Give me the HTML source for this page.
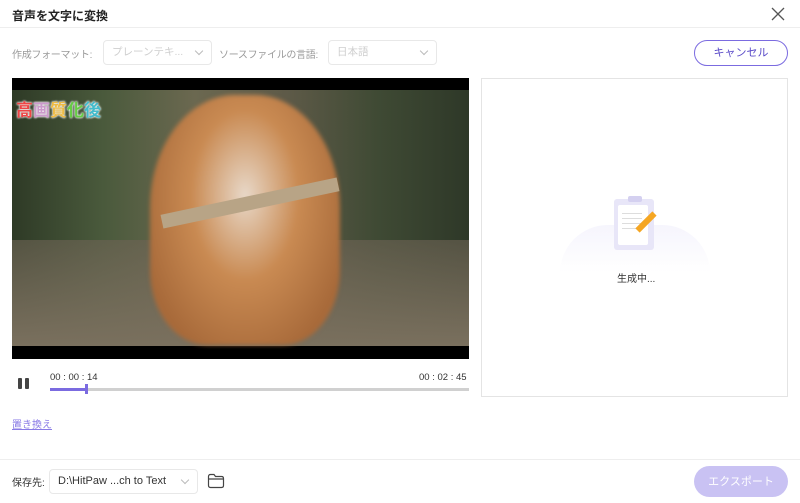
<!DOCTYPE html>
<html><head><meta charset="utf-8"><style>
*{margin:0;padding:0;box-sizing:border-box}
body{width:800px;height:503px;background:#fff;font-family:"Liberation Sans","Noto Sans CJK JP",sans-serif;position:relative;overflow:hidden;color:#333}
.a{position:absolute;white-space:nowrap}
.sel{position:absolute;border:1px solid #e8e8e8;border-radius:4px;height:25px;font-size:10.5px;color:#cfcfcf;padding:0 8px;line-height:23px;white-space:nowrap}
.chev{position:absolute;right:9px;top:7px;width:6px;height:6px;border-right:1px solid #bbb;border-bottom:1px solid #bbb;transform:rotate(45deg)}
</style></head><body>
<div class="a" style="left:12px;top:7px;font-size:12px;font-weight:bold;color:#222">音声を文字に変換</div>
<svg class="a" style="left:771px;top:7px" width="14" height="14"><path d="M1 1L13 13M13 1L1 13" stroke="#555" stroke-width="1.3"/></svg>
<div class="a" style="left:0;top:27px;width:800px;height:1px;background:#eee"></div>
<div class="a" style="left:12px;top:46px;font-size:10px;color:#999;letter-spacing:-0.3px">作成フォーマット:</div>
<div class="sel" style="left:103px;top:40px;width:109px">プレーンテキ...<span class="chev"></span></div>
<div class="a" style="left:219px;top:46px;font-size:10px;color:#999;letter-spacing:-0.3px">ソースファイルの言語:</div>
<div class="sel" style="left:328px;top:40px;width:109px">日本語<span class="chev"></span></div>
<div class="a" style="left:694px;top:40px;width:94px;height:26px;border:1px solid #7b6be0;border-radius:13px;font-size:11px;color:#5a4bc8;text-align:center;line-height:24px">キャンセル</div>
<div class="a" style="left:12px;top:78px;width:457px;height:281px;background:#000"></div>
<div class="a" style="left:12px;top:90px;width:457px;height:256px;background:linear-gradient(90deg,#2e3a26 0%,#4a5a3c 20%,#6b6850 40%,#5e5a48 60%,#3f4a34 80%,#2e3828 100%)"></div>
<div class="a" style="left:12px;top:240px;width:457px;height:106px;background:linear-gradient(180deg,rgba(110,100,85,.6),#7a705e)"></div>
<div class="a" style="left:150px;top:95px;width:190px;height:250px;border-radius:45% 45% 30% 30%;background:radial-gradient(ellipse at 50% 40%,#e8d8c8 0%,#c98a52 40%,#a86a3a 80%);filter:blur(2px)"></div>
<div class="a" style="left:160px;top:196px;width:180px;height:14px;background:#b8a486;transform:rotate(-12deg)"></div>
<div class="a" style="left:16px;top:96px;font-size:17px;font-weight:bold;color:#e44;text-shadow:0 0 2px #fff,0 0 2px #fff">高<span style="color:#c9c">画</span><span style="color:#eb4">質</span><span style="color:#6c4">化</span><span style="color:#4bc">後</span></div>
<div class="a" style="left:18px;top:378px;width:4px;height:11px;background:#444;border-radius:1px"></div>
<div class="a" style="left:25px;top:378px;width:4px;height:11px;background:#444;border-radius:1px"></div>
<div class="a" style="left:50px;top:372px;font-size:9.5px;color:#333">00 : 00 : 14</div>
<div class="a" style="left:419px;top:372px;font-size:9.5px;color:#333">00 : 02 : 45</div>
<div class="a" style="left:50px;top:388px;width:419px;height:3px;background:#d0d0d0"></div>
<div class="a" style="left:50px;top:388px;width:37px;height:3px;background:#7b6be0"></div>
<div class="a" style="left:85px;top:384px;width:3px;height:10px;background:#7b6be0"></div>
<div class="a" style="left:12px;top:416px;font-size:10px;color:#8a7be6;text-decoration:underline">置き換え</div>
<div class="a" style="left:481px;top:78px;width:307px;height:319px;border:1px solid #e4e4e4"></div>
<div class="a" style="left:560px;top:225px;width:150px;height:48px;border-radius:75px 75px 0 0;background:linear-gradient(#f6f5fd,#fff)"></div>
<div class="a" style="left:614px;top:199px;width:40px;height:51px;background:#e8e6f8;border-radius:3px"></div>
<div class="a" style="left:618px;top:205px;width:30px;height:40px;background:#fff;border-radius:2px"></div>
<div class="a" style="left:628px;top:196px;width:14px;height:6px;background:#d4d0f0;border-radius:2px"></div>
<div class="a" style="left:622px;top:213px;width:20px;height:1px;background:#ddd;box-shadow:0 5px #ddd,0 10px #ddd,0 15px #ddd"></div>
<div class="a" style="left:643px;top:210px;width:6px;height:24px;background:#f5a623;transform:rotate(45deg)"></div>
<div class="a" style="left:617px;top:270px;font-size:10px;color:#333">生成中...</div>
<div class="a" style="left:0;top:459px;width:800px;height:1px;background:#eee"></div>
<div class="a" style="left:12px;top:474px;font-size:10px;color:#333">保存先:</div>
<div class="sel" style="left:49px;top:469px;width:149px;height:25px;color:#333;font-size:11px;padding-left:8px">D:\HitPaw ...ch to Text<span class="chev"></span></div>
<svg class="a" style="left:207px;top:473px" width="18" height="16"><path d="M1.5 3.5Q1.5 1.5 3.5 1.5H7L8.5 3.5H14.5Q16.5 3.5 16.5 5.5V12.5Q16.5 14.5 14.5 14.5H3.5Q1.5 14.5 1.5 12.5Z M1.5 6H16.5" fill="none" stroke="#444" stroke-width="1.2"/></svg>
<div class="a" style="left:694px;top:466px;width:94px;height:31px;background:#c9c2f3;border-radius:16px;font-size:11px;color:#fff;text-align:center;line-height:32px">エクスポート</div>
</body></html>
